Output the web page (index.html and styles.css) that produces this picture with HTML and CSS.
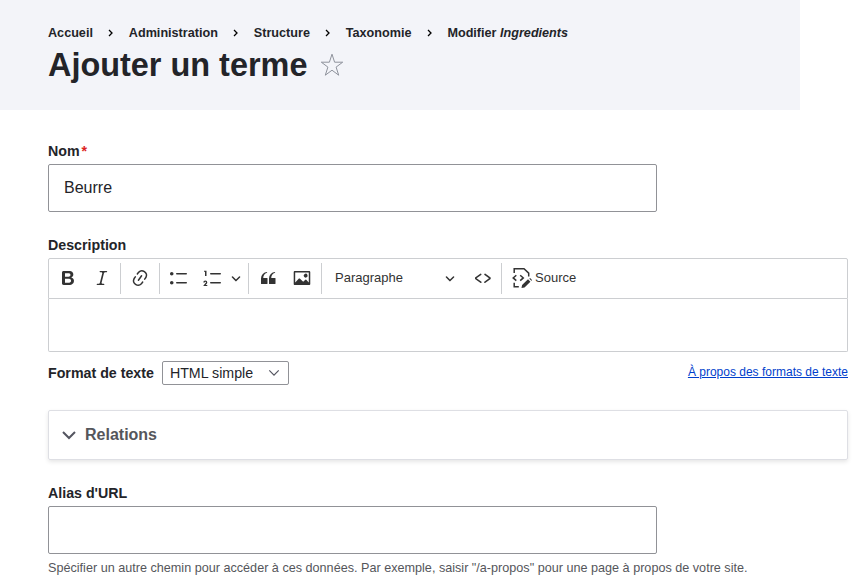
FILE: index.html
```html
<!DOCTYPE html>
<html lang="fr">
<head>
<meta charset="utf-8">
<title>Ajouter un terme</title>
<link rel="stylesheet" href="styles.css">
</head>
<body>
<header class="page-header">
  <nav>
    <ol class="breadcrumb">
      <li>Accueil</li>
      <li><svg class="sep" viewBox="0 0 5 8"><path d="M1 1l3 3-3 3"/></svg>Administration</li>
      <li><svg class="sep" viewBox="0 0 5 8"><path d="M1 1l3 3-3 3"/></svg>Structure</li>
      <li><svg class="sep" viewBox="0 0 5 8"><path d="M1 1l3 3-3 3"/></svg>Taxonomie</li>
      <li><svg class="sep" viewBox="0 0 5 8"><path d="M1 1l3 3-3 3"/></svg>Modifier <em>Ingredients</em></li>
    </ol>
  </nav>
  <div class="title-row">
    <h1>Ajouter un terme</h1>
    <svg class="star" viewBox="0 0 24 24"><path d="M12 1.2l2.6 8H22.700l-6.600 4.900 2.600 8.100-6.700-5-6.700 5 2.600-8.100-6.600-4.900h8.100z"/></svg>
  </div>
</header>
<main>
  <div class="field">
    <label class="label" for="name">Nom<span class="required">*</span></label>
    <input class="input" id="name" type="text" value="Beurre">
  </div>
  <div class="field description">
    <div class="label">Description</div>
    <div class="toolbar">
      <button class="tool"><svg viewBox="0 0 20 20"><path d="M10.187 17H5.773c-.637 0-1.092-.138-1.364-.415-.273-.277-.409-.718-.409-1.323V4.738c0-.617.14-1.062.419-1.332.279-.27.73-.406 1.354-.406h4.68c.69 0 1.288.041 1.793.124.506.083.96.242 1.36.478.341.197.644.447.906.75a3.262 3.262 0 0 1 .808 2.162c0 1.401-.722 2.426-2.167 3.075C15.05 10.175 16 11.315 16 13.01a3.756 3.756 0 0 1-2.296 3.504 6.1 6.1 0 0 1-1.517.377c-.571.073-1.238.11-2 .11zm-.217-6.217H7v4.087h3.069c1.977 0 2.965-.69 2.965-2.072 0-.707-.256-1.22-.768-1.537-.512-.319-1.277-.478-2.296-.478zM7 5.13v3.619h2.606c.729 0 1.292-.067 1.69-.2a1.6 1.6 0 0 0 .91-.765c.165-.267.247-.566.247-.897 0-.707-.26-1.176-.778-1.409-.519-.232-1.31-.348-2.375-.348H7z"/></svg></button>
      <button class="tool"><svg viewBox="0 0 20 20"><path d="m9.586 14.633.021.004c-.036.335.095.655.393.962.082.083.173.15.274.201h1.474a.6.6 0 1 1 0 1.2H5.304a.6.6 0 0 1 0-1.2h1.15c.474-.07.809-.182 1.005-.334.157-.122.291-.32.404-.597l2.416-9.55a1.053 1.053 0 0 0-.281-.823 1.12 1.12 0 0 0-.442-.296H8.15a.6.6 0 0 1 0-1.2h6.443a.6.6 0 1 1 0 1.2h-1.195c-.376.056-.65.155-.823.296-.215.175-.423.439-.623.79l-2.366 9.347z"/></svg></button>
      <span class="divider tight"></span>
      <button class="tool"><svg viewBox="0 0 20 20"><path d="m11.077 15 .991-1.416a.75.75 0 1 1 1.229.86l-1.148 1.64a.748.748 0 0 1-.217.206 5.251 5.251 0 0 1-8.503-5.955.741.741 0 0 1 .12-.274l1.147-1.639a.75.75 0 1 1 1.228.86L4.933 10.7l.006.003a3.75 3.75 0 0 0 6.132 4.294l.006.004zm5.494-5.335a.748.748 0 0 1-.12.274l-1.147 1.639a.75.75 0 1 1-1.228-.86l.86-1.23a3.75 3.75 0 0 0-6.144-4.301l-.86 1.229a.75.75 0 0 1-1.229-.86l1.148-1.64a.748.748 0 0 1 .217-.206 5.251 5.251 0 0 1 8.503 5.955zm-4.563-2.532a.75.75 0 0 1 .184 1.045l-3.155 4.505a.75.75 0 1 1-1.229-.86l3.155-4.506a.75.75 0 0 1 1.045-.184z"/></svg></button>
      <span class="divider"></span>
      <button class="tool"><svg viewBox="0 0 20 20"><path d="M7 5.75c0 .414.336.75.75.75h9.5a.75.75 0 1 0 0-1.500h-9.500a.75.75 0 0 0-.750.750zm-6 0C1 4.784 1.777 4 2.750 4c.966 0 1.750.777 1.750 1.750 0 .966-.777 1.750-1.750 1.750C1.784 7.500 1 6.723 1 5.750zm6 9c0 .414.336.750.750.750h9.500a.75.75 0 1 0 0-1.500h-9.500a.75.75 0 0 0-.750.750zm-6 0c0-.966.777-1.750 1.750-1.750.966 0 1.750.777 1.750 1.750 0 .966-.777 1.750-1.750 1.750-.966 0-1.750-.777-1.750-1.750z"/></svg></button>
      <button class="tool"><svg viewBox="0 0 20 20"><path d="M7 5.75c0 .414.336.75.75.75h9.500a.75.75 0 1 0 0-1.500h-9.500a.75.75 0 0 0-.750.750zM3.500 3v5H2V3.700H1v-1h2.500V3zM.343 17.857l2.590-3.257H2.920a.6.6 0 1 0-1.040 0H.302a2 2 0 1 1 3.995 0h-.001c-.048.405-.160.734-.333.988-.175.254-.590.692-1.244 1.312H4.300v1h-4l.043-.043zM7 14.750c0 .414.336.750.750.750h9.500a.75.75 0 1 0 0-1.500h-9.500a.75.75 0 0 0-.750.750z"/></svg></button>
      <button class="tool arrow"><svg viewBox="0 0 10 10"><path d="M.941 4.523a.75.75 0 1 1 1.060-1.060l3.006 3.005 3.005-3.005a.75.75 0 1 1 1.060 1.060l-3.549 3.550a.75.75 0 0 1-1.168-.136L.941 4.523z"/></svg></button>
      <span class="divider"></span>
      <button class="tool"><svg viewBox="0 0 20 20"><path d="M3 10.423a6.500 6.500 0 0 1 6.056-6.408l.038.670C6.448 5.423 5.354 7.663 5.220 10H9c.552 0 .500.432.500.986v4.511c0 .554-.448.503-1 .503h-5c-.552 0-.500-.449-.500-1.003v-4.574zm8 0a6.500 6.500 0 0 1 6.056-6.408l.038.670c-2.646.739-3.740 2.979-3.873 5.315H17c.552 0 .500.432.500.986v4.511c0 .554-.448.503-1 .503h-5c-.552 0-.500-.449-.500-1.003v-4.574z"/></svg></button>
      <button class="tool"><svg viewBox="0 0 20 20"><path d="M6.910 10.540c.260-.230.640-.210.880.030l3.360 3.140 2.230-2.060a.64.64 0 0 1 .870 0l2.520 2.970V4.500H3.200v10.120l3.710-4.080zm10.270-7.510c.600 0 1.090.470 1.090 1.050v11.840c0 .590-.490 1.060-1.090 1.060H2.790c-.600 0-1.090-.470-1.090-1.060V4.080c0-.580.490-1.050 1.100-1.050h14.380zm-5.220 5.560a1.960 1.960 0 1 1 3.400-1.960 1.960 1.960 0 0 1-3.400 1.960z"/></svg></button>
      <span class="divider"></span>
      <button class="heading"><span>Paragraphe</span><svg viewBox="0 0 10 10"><path d="M.941 4.523a.75.75 0 1 1 1.060-1.060l3.006 3.005 3.005-3.005a.75.75 0 1 1 1.060 1.060l-3.549 3.550a.75.75 0 0 1-1.168-.136L.941 4.523z"/></svg></button>
      <button class="tool"><svg viewBox="0 0 20 20"><path d="m12.500 5.700 5.200 3.900v1.300l-5.600 4c-.100.200-.300.200-.500.200-.300-.100-.600-.700-.600-1l.300-.400 4.700-3.500L11.500 7l-.200-.200c-.100-.300-.100-.600 0-.800.200-.200.500-.400.800-.400a.8.8 0 0 1 .4.1zm-5.200 0L2 9.600v1.300l5.600 4c.100.200.300.200.500.200.300-.100.700-.700.600-1 0-.100 0-.300-.200-.400l-5-3.500L8.200 7l.2-.2c.1-.3.1-.6 0-.8-.2-.2-.5-.4-.8-.4a.8.8 0 0 0-.3.1z"/></svg></button>
      <span class="divider tight"></span>
      <button class="source"><svg viewBox="0 0 20 20"><path class="line" d="M2.200 5V.8h9.800l4.700 4.300v3.400M2.200 14.800v4h4.600M4.300 7.200L1.200 9.900l3.100 2.700M8.200 7.200l3.100 2.700-3.100 2.700"/><path d="M16 11.300l2.400 2.400-5.900 5.900-3 .4.600-2.900zM17.300 10.700l.8-.6 2 2-.7.700z"/></svg><span>Source</span></button>
    </div>
    <div class="editor" contenteditable="true"></div>
    <div class="format-row">
      <span class="format-label">Format de texte</span>
      <div class="select"><span>HTML simple</span><svg viewBox="0 0 14 9"><path d="M1.500 1.500l5.500 5.500 5.500-5.500"/></svg></div>
      <a class="help" href="#">À propos des formats de texte</a>
    </div>
  </div>
  <section class="details">
    <svg viewBox="0 0 16 16"><path d="M2 5l6 6 6-6"/></svg>
    <span>Relations</span>
  </section>
  <div class="field">
    <label class="label" for="alias">Alias d'URL</label>
    <input class="input" id="alias" type="text">
    <p class="hint">Spécifier un autre chemin pour accéder à ces données. Par exemple, saisir "/a-propos" pour une page à propos de votre site.</p>
  </div>
</main>
</body>
</html>
```

FILE: styles.css
```css
* { box-sizing: border-box; }
html { overflow: hidden; }
body {
  margin: 0;
  background: #fff;
  color: #232429;
  font-family: "Liberation Sans", Arial, sans-serif;
  font-size: 16px;
}
.page-header {
  width: 800px;
  height: 110px;
  padding: 24px 48px 0;
  background: #f3f4f9;
}
.breadcrumb {
  display: flex;
  margin: 0;
  padding: 0;
  list-style: none;
  font-size: 12.64px;
  font-weight: 700;
  line-height: 18px;
  white-space: pre;
}
.sep {
  width: 5px;
  height: 8px;
  margin: 0 15.4px 0 15.5px;
  fill: none;
  stroke: #000;
  stroke-width: 1.3;
}
.title-row { display: flex; align-items: center; }
h1 {
  margin: 1px 0 0;
  font-size: 32.44px;
  line-height: 44px;
}
.star {
  width: 24px;
  height: 24px;
  margin: 1px 0 0 13px;
  fill: none;
  stroke: #8e929c;
  stroke-width: 1;
}
main { width: 848px; padding: 30px 0 0 48px; }
.label {
  display: block;
  height: 24px;
  font-size: 14.22px;
  font-weight: 700;
  line-height: 22px;
}
.required { margin-left: 2px; color: #dc2323; }
.input {
  display: block;
  width: 609px;
  height: 48px;
  padding: 0 15px;
  border: 1px solid #919297;
  border-radius: 2px;
  background: #fff;
  color: #232429;
  font: 16px "Liberation Sans", Arial, sans-serif;
}
.description { margin-top: 22px; }
.toolbar {
  display: flex;
  align-items: center;
  height: 41px;
  padding-left: 2px;
  border: 1px solid #ccced1;
  border-radius: 2px 2px 0 0;
}
.toolbar button {
  display: flex;
  align-items: center;
  justify-content: center;
  flex: none;
  height: 34px;
  padding: 0 0 2px;
  border: 0;
  background: none;
  color: #333;
  font: 13px "Liberation Sans", Arial, sans-serif;
}
.toolbar svg { flex: none; width: 20px; height: 20px; fill: #333; }
.toolbar .tool { width: 34px; }
.toolbar .arrow { width: 16px; margin-left: -2px; margin-right: 2px; }
.toolbar .arrow svg, .toolbar .heading svg { width: 10px; height: 10px; }
.toolbar .heading {
  justify-content: space-between;
  width: 142px;
  padding: 0 11px 2px;
}
.divider { width: 1px; height: 31px; margin: 0 2px; background: #ccced1; }
.divider.tight { margin-left: 1px; }
.toolbar .source { gap: 3px; margin-left: 8px; }
.line { fill: none; stroke: #333; stroke-width: 1.5; }
.editor {
  height: 53px;
  border: 1px solid #ccced1;
  border-top: 0;
  border-radius: 0 0 2px 2px;
}
.format-row { display: flex; align-items: center; height: 24px; margin-top: 9px; }
.format-label { font-size: 14.22px; font-weight: 700; }
.select {
  display: flex;
  align-items: center;
  justify-content: space-between;
  width: 127px;
  height: 24px;
  margin-left: 8px;
  padding: 0 8px 0 7px;
  border: 1px solid #919297;
  border-radius: 2px;
  font-size: 14.22px;
}
.select svg { width: 12px; height: 8px; fill: none; stroke: #545560; stroke-width: 1.4; }
.help {
  margin: -2px 0 0 auto;
  color: #003ecc;
  font-size: 12px;
  text-decoration: underline;
}
.details {
  display: flex;
  align-items: center;
  gap: 8px;
  height: 50px;
  margin: 25px 0 22px;
  padding-left: 12px;
  border: 1px solid #dedfe4;
  border-radius: 2px;
  box-shadow: 0 2px 4px rgba(0, 0, 0, .1);
  color: #55565b;
  font-weight: 700;
}
.details svg { width: 16px; height: 16px; fill: none; stroke: #545560; stroke-width: 2; }
.hint {
  margin: 5px 0 0;
  color: #55565b;
  font-size: 12.64px;
  line-height: 18px;
  white-space: nowrap;
}
```
